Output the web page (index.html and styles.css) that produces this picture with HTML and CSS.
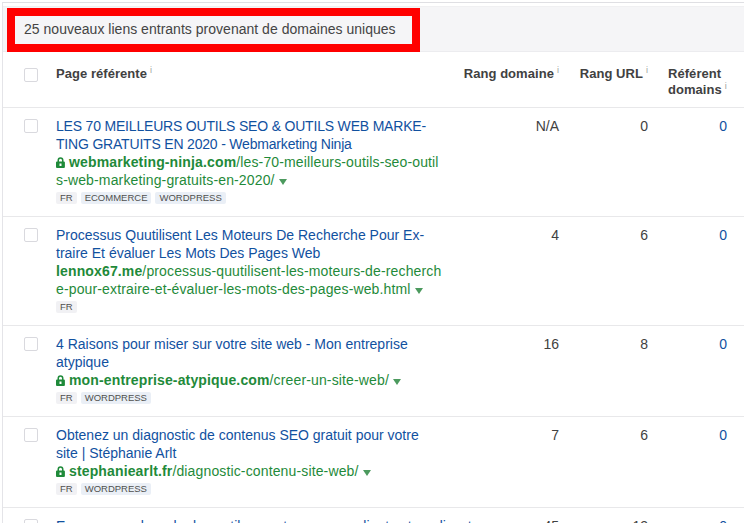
FILE: index.html
```html
<!DOCTYPE html>
<html lang="fr">
<head>
<meta charset="utf-8">
<title>Liens entrants</title>
<link rel="stylesheet" href="styles.css">
</head>
<body>
<svg class="defs" width="0" height="0" aria-hidden="true">
  <symbol id="lock" viewBox="0 0 9 11"><path d="M1.5 4.5V3.2a3 3 0 0 1 6 0v1.3h.4a1 1 0 0 1 1 1V10a1 1 0 0 1-1 1H1a1 1 0 0 1-1-1V5.500a1 1 0 0 1 1-1zm1.500 0h3V3.200a1.500 1.500 0 0 0-3 0zM3.500 6.500v2.500h2V6.500z" fill="#1f8a3a" fill-rule="evenodd"/></symbol>
</svg>
<main class="panel">
  <div class="banner"><div class="banner-box">25 nouveaux liens entrants provenant de domaines uniques</div></div>
  <div class="row head">
    <div class="c-check"><span class="box"></span></div>
    <div class="c-page">Page référente<sup class="i">i</sup></div>
    <div class="c-num">Rang domaine<sup class="i">i</sup></div>
    <div class="c-num">Rang URL<sup class="i">i</sup></div>
    <div class="c-ref">Référent domains<sup class="i">i</sup></div>
  </div>
  <div class="row item">
    <div class="c-check"><span class="box"></span></div>
    <div class="c-page">
      <a class="title caps">LES 70 MEILLEURS OUTILS SEO &amp; OUTILS WEB MARKE-<br>TING GRATUITS EN 2020 - Webmarketing Ninja</a>
      <div class="url"><svg class="lock"><use href="#lock"/></svg><b>webmarketing-ninja.com</b>/les-70-meilleurs-outils-seo-outil<br>s-web-marketing-gratuits-en-2020/<span class="caret"></span></div>
      <div class="tags"><span class="tag lang">FR</span><span class="tag">ECOMMERCE</span><span class="tag">WORDPRESS</span></div>
    </div>
    <div class="c-num">N/A</div><div class="c-num">0</div><div class="c-ref link">0</div>
  </div>
  <div class="row item">
    <div class="c-check"><span class="box"></span></div>
    <div class="c-page">
      <a class="title">Processus Quutilisent Les Moteurs De Recherche Pour Ex-<br>traire Et évaluer Les Mots Des Pages Web</a>
      <div class="url"><b>lennox67.me</b>/processus-quutilisent-les-moteurs-de-recherch<br>e-pour-extraire-et-évaluer-les-mots-des-pages-web.html<span class="caret"></span></div>
      <div class="tags"><span class="tag lang">FR</span></div>
    </div>
    <div class="c-num">4</div><div class="c-num">6</div><div class="c-ref link">0</div>
  </div>
  <div class="row item">
    <div class="c-check"><span class="box"></span></div>
    <div class="c-page">
      <a class="title">4 Raisons pour miser sur votre site web - Mon entreprise<br>atypique</a>
      <div class="url"><svg class="lock"><use href="#lock"/></svg><b>mon-entreprise-atypique.com</b>/creer-un-site-web/<span class="caret"></span></div>
      <div class="tags"><span class="tag lang">FR</span><span class="tag">WORDPRESS</span></div>
    </div>
    <div class="c-num">16</div><div class="c-num">8</div><div class="c-ref link">0</div>
  </div>
  <div class="row item">
    <div class="c-check"><span class="box"></span></div>
    <div class="c-page">
      <a class="title">Obtenez un diagnostic de contenus SEO gratuit pour votre<br>site | Stéphanie Arlt</a>
      <div class="url"><svg class="lock"><use href="#lock"/></svg><b>stephaniearlt.fr</b>/diagnostic-contenu-site-web/<span class="caret"></span></div>
      <div class="tags"><span class="tag lang">FR</span><span class="tag">WORDPRESS</span></div>
    </div>
    <div class="c-num">7</div><div class="c-num">6</div><div class="c-ref link">0</div>
  </div>
  <div class="row item">
    <div class="c-check"><span class="box"></span></div>
    <div class="c-page">
      <a class="title">Ensemencez le web : les outils pour trouver vos clients et en discuter</a>
    </div>
    <div class="c-num">45</div><div class="c-num">13</div><div class="c-ref link">0</div>
  </div>
</main>
</body>
</html>
```
FILE: styles.css
```css
html, body { margin: 0; height: 100%; overflow: hidden; background: #fff; }
body { font-family: "Liberation Sans", Arial, sans-serif; font-size: 14px; color: #414141; }
.defs { position: absolute; }
.panel { margin: 2px 0 0 2px; border-top: 1px solid #dfdfe3; border-left: 1px solid #e4e4e8; }
.banner { margin-top: 3px; background: #f5f5f7; border-top: 1px solid #f0f0f2; border-bottom: 1px solid #ececef; padding: 1px 0 0 4px; height: 46px; box-sizing: border-box; }
.banner-box { width: 413px; height: 44px; box-sizing: border-box; border: 8px solid #f00; padding-left: 9px; line-height: 27px; font-size: 14px; letter-spacing: .02px; color: #444; }
.row { display: grid; grid-template-columns: 53px 385px 118px 89px 79px; border-bottom: 1px solid #e8e8ea; box-sizing: border-box; }
.head { height: 56px; padding-top: 14px; font-weight: 700; line-height: 16px; font-size: 13px; letter-spacing: .05px; }
.item { padding: 9px 0 12px; line-height: 18px; }
.c-check { padding-left: 21px; }
.box { display: block; width: 12px; height: 12px; margin-top: 2px; border: 1px solid #d9d9de; border-radius: 2px; background: #fff; }
.c-num { text-align: right; }
.c-ref { padding-left: 20px; }
.item .c-ref { text-align: right; padding: 0; }
.link { color: #11519f; }
.i { font-size: 9px; font-weight: 400; color: #a0a0a0; line-height: 0; margin-left: 3px; vertical-align: 5px; }
.title { display: block; color: #11519f; white-space: nowrap; }
.caps { letter-spacing: -.19px; }
.url { color: #1f8a3a; white-space: nowrap; letter-spacing: .14px; }
.url b { font-weight: 700; }
.lock { display: inline-block; width: 9px; height: 11px; margin-right: 4px; vertical-align: -1px; }
.caret { display: inline-block; width: 0; height: 0; margin-left: 4px; border-left: 4px solid transparent; border-right: 4px solid transparent; border-top: 6px solid #4c9a5e; }
.tags { display: flex; gap: 4px; height: 12px; margin-top: 3px; }
.tag { background: #eaeff6; border-radius: 2px; padding: 0 4px; font-size: 9.500px; line-height: 12px; color: #4f4f4f; }
.tag.lang { background: #f1f1f4; }
```
